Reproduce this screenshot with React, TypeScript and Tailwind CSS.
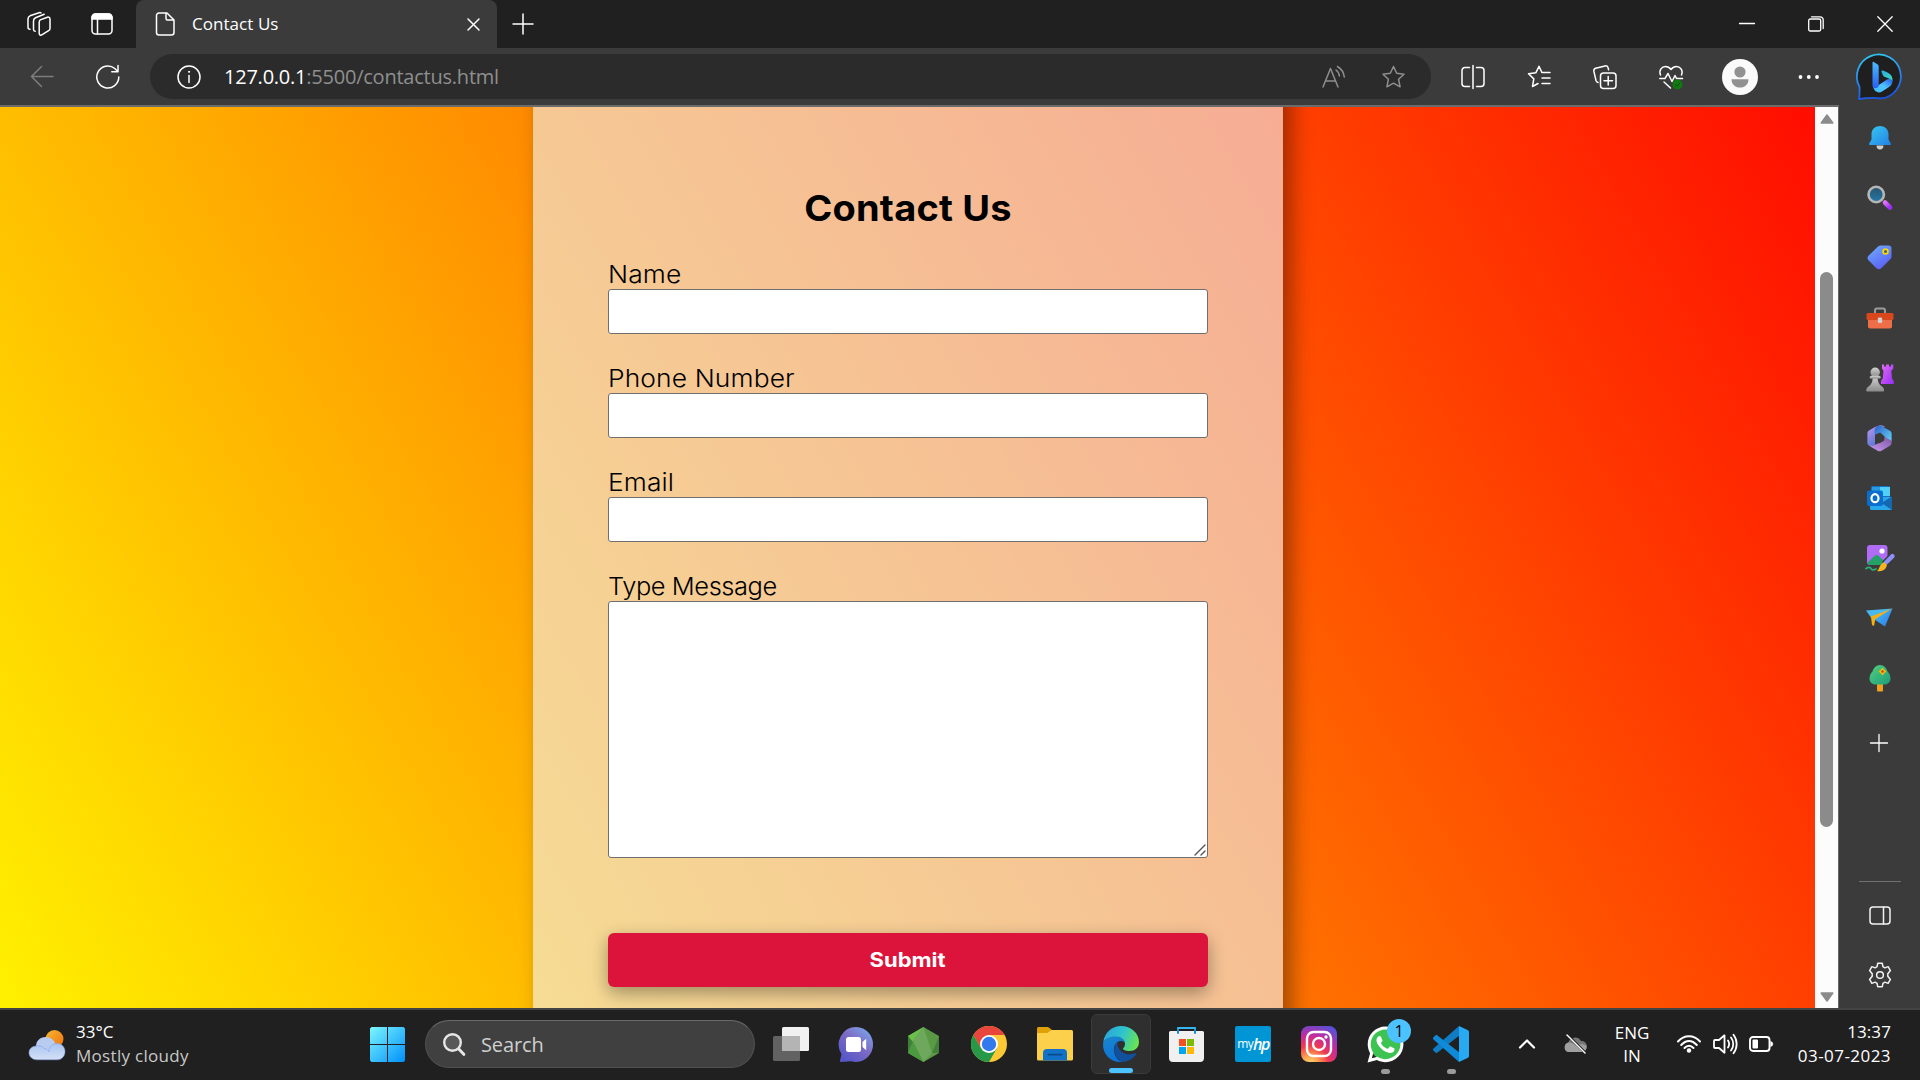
import type { ReactNode } from "react";
import { FaWhatsapp } from "react-icons/fa";

type IconProps = { w?: number; h?: number; box?: string; strokeWidth?: number; className?: string; children: ReactNode };

function Icon({ w = 24, h = 24, box, strokeWidth = 1.5, className = "", children }: IconProps) {
  return (
    <svg
      width={w}
      height={h}
      viewBox={box ?? `0 0 ${w} ${h}`}
      fill="none"
      stroke="currentColor"
      strokeWidth={strokeWidth}
      strokeLinecap="round"
      strokeLinejoin="round"
      className={`block shrink-0 overflow-visible ${className}`}
    >
      {children}
    </svg>
  );
}

function Slot({ className = "", children }: { className?: string; children: ReactNode }) {
  return <div className={`flex shrink-0 items-center justify-center ${className}`}>{children}</div>;
}

const STAR = "M12 1.5l3.2 6.8 7.3.9-5.4 5.1 1.5 7.5L12 18.2l-6.6 3.6 1.5-7.5L1.5 9.2l7.3-.9z";

/* ---------- Tab strip ---------- */
function TabStrip() {
  return (
    <div className="flex h-12 shrink-0 bg-[#202020] text-white">
      <Slot className="ml-[27px] w-6">
        <Icon>
          <path d="M13.2 7.9l7.2-2.7c1.3-.5 2.6.3 2.6 1.7v9.5c0 1-.5 1.8-1.4 2.3l-6.8 4.2c-1.2.8-2.6 0-2.6-1.4v-11c0-1.1.3-2.2 1-2.6z" />
          <path d="M8.2 19.2c-1 0-1.7-.7-1.7-1.7V9c0-1.500.7-2.600 2-3.200l8.700-3.500" />
          <path d="M3 17.2c-1.2 0-2-.8-2-2V7c0-1.400.8-2.600 2-3.200L12 .7c.8-.3 1.500-.2 2 .2" />
        </Icon>
      </Slot>
      <Slot className="ml-[40px] w-[22px]">
        <Icon w={22} h={22}>
          <rect x="1" y="1" width="20" height="20" rx="3.500" />
          <path d="M1 6V4.500A3.500 3.500 0 0 1 4.500 1h13A3.500 3.500 0 0 1 21 4.500V6z" fill="currentColor" />
          <path d="M6.500 6v15" />
        </Icon>
      </Slot>
      <div className="ml-[23px] flex h-12 w-[361px] items-center rounded-t-lg bg-[#3b3b3b]">
        <Icon w={20} h={24} className="ml-[19px]">
          <path d="M4 1h8l7 7v12.500a2.500 2.500 0 0 1-2.500 2.500H4a2.500 2.500 0 0 1-2.500-2.500v-17A2.500 2.500 0 0 1 4 1zM11 1v5.500A1.500 1.500 0 0 0 12.500 8H19" />
        </Icon>
        <span className="ml-[17px] w-[275px] font-['Open_Sans','Noto_Sans',sans-serif] text-[17px] tracking-[0.05px] whitespace-nowrap">
          Contact Us
        </span>
        <Icon w={13} h={13} className="mt-px">
          <path d="M1 1l11 11M12 1L1 12" />
        </Icon>
      </div>
      <Slot className="ml-[15px] w-[22px]">
        <Icon w={22} h={22} className="-mt-px">
          <path d="M11 1v20M1 11h20" />
        </Icon>
      </Slot>
      <div className="mr-px ml-auto flex">
        <Slot className="w-[69px]">
          <Icon w={16} h={16}>
            <path d="M.5 7.500h15" strokeWidth={1.3} />
          </Icon>
        </Slot>
        <Slot className="w-[69px]">
          <Icon w={16} h={16} className="-mt-px">
            <rect x=".7" y="3" width="12" height="12" rx="1.500" strokeWidth={1.3} />
            <path d="M3.500.8H12A3 3 0 0 1 15.200 4v8.500" strokeWidth={1.3} />
          </Icon>
        </Slot>
        <Slot className="w-[69px]">
          <Icon w={16} h={16} className="-mt-px">
            <path d="M.8.800l14.400 14.400M15.200.800L.8 15.200" strokeWidth={1.3} />
          </Icon>
        </Slot>
      </div>
    </div>
  );
}

/* ---------- Address bar ---------- */
function Toolbar() {
  return (
    <div className="flex h-[57px] shrink-0 items-center bg-[#3b3b3b] text-white">
      <Slot className="ml-[30px] w-6 text-[#7d7d7d]">
        <Icon>
          <path d="M23 11.500H1.500M11.500 1.500L1.500 11.500l10 10" />
        </Icon>
      </Slot>
      <Slot className="ml-[42px] w-6">
        <Icon>
          <path d="M22.800 12A11 11 0 1 1 18.800 3.500L21.800 6.500M22 .5v6.200h-6.200" />
        </Icon>
      </Slot>
      <div className="ml-[30px] flex h-[45px] w-[1281px] items-center rounded-full bg-[#2b2b2b]">
        <Icon className="ml-[27px]">
          <circle cx="12" cy="12" r="11" />
          <path d="M12 10.500v7" />
          <circle cx="12" cy="6.800" r=".6" fill="currentColor" strokeWidth={1} />
        </Icon>
        <span className="ml-[23px] font-['Open_Sans','Noto_Sans',sans-serif] text-[20px] tracking-[-0.23px] whitespace-nowrap text-[#8f8f8f]">
          <span className="text-white">127.0.0.1</span>:5500/contactus.html
        </span>
        <div className="mr-[25px] ml-auto flex text-[#8f8f8f]">
          <Icon>
            <path d="M1 22L8.500 3.500 16 22M3.500 16h10M14 5c2 1.500 3.200 3.500 3.400 6M15.500 1.500c3.500 2.200 6.300 6 6.800 10.500" />
          </Icon>
          <Icon w={25} h={24} box="0 0 24 24" className="ml-[35px]">
            <path d={STAR} />
          </Icon>
        </div>
      </div>
      <Slot className="ml-[9px] w-[66px]">
        <Icon>
          <path d="M8.500 2.500H4A3 3 0 0 0 1 5.500v13a3 3 0 0 0 3 3h4.500M15.500 2.500H20a3 3 0 0 1 3 3v13a3 3 0 0 1-3 3h-4.500M12 .5v23" />
        </Icon>
      </Slot>
      <Slot className="w-[66px]">
        <Icon>
          <path d="M14.800 7.200L12 1.300 8.800 7.800l-7.300 1 5.300 5.100-1.300 7.600 5.500-3M14.800 7.500H23M15 13h8M15 18.500h8" />
        </Icon>
      </Slot>
      <Slot className="w-[66px]">
        <Icon>
          <rect x="7.500" y="8" width="15.500" height="15.500" rx="3" />
          <path d="M15.200 11.500v8.500M11 15.700h8.500M5 17.500c-1-.3-1.700-1-2-2L.9 6.400c-.3-1.500.4-2.700 1.800-3.100L12 .9c1.400-.3 2.500.3 3 1.600l.6 2.200" />
        </Icon>
      </Slot>
      <Slot className="w-[66px]">
        <Icon>
          <path d="M1.500 10C-.5 5 3 1.500 6.500 1.500c2.500 0 4 1 5.500 3 1.500-2 3-3 5.500-3C21 1.500 24.500 5 22.500 10M.8 13.500H6L9 8.500l4 8 3-6 1.500 3h6M5 17l6.500 6" />
          <circle cx="18.500" cy="19.500" r="5" fill="#0f7b0f" stroke="none" />
          <path d="M16.300 19.700l1.600 1.600 3-3.200" stroke="#1c3d1c" strokeWidth={1} />
        </Icon>
      </Slot>
      <Slot className="ml-[2px] w-[68px]">
        <Icon w={36} h={36}>
          <circle cx="18" cy="18" r="18" fill="#fafafa" stroke="none" />
          <circle cx="18" cy="13" r="5.600" fill="#919191" stroke="none" />
          <path d="M9.500 20.200h17c0 5-3.500 8.300-8.500 8.300s-8.500-3.300-8.500-8.300z" fill="#919191" stroke="none" />
        </Icon>
      </Slot>
      <Slot className="w-[70px]">
        <Icon w={22} h={6}>
          <g fill="currentColor" stroke="none">
            <circle cx="2.500" cy="3" r="1.900" />
            <circle cx="10.800" cy="3" r="1.900" />
            <circle cx="19" cy="3" r="1.900" />
          </g>
        </Icon>
      </Slot>
      <Slot className="ml-px w-[70px]">
        <Icon w={45} h={46}>
          <defs>
            <linearGradient id="bingRing" x1="0.400" y1="0" x2="0.600" y2="1">
              <stop offset="0" stopColor="#2fc4f0" />
              <stop offset="0.500" stopColor="#2a86f0" />
              <stop offset="1" stopColor="#1a50e0" />
            </linearGradient>
            <linearGradient id="bingStem" x1="0" y1="0" x2="0" y2="1">
              <stop offset="0" stopColor="#4cbcff" />
              <stop offset="1" stopColor="#2860f0" />
            </linearGradient>
            <linearGradient id="bingBase" x1="0" y1="1" x2="1" y2="0">
              <stop offset="0" stopColor="#3cc0ff" />
              <stop offset="0.500" stopColor="#50c4ff" />
              <stop offset="1" stopColor="#2258e8" />
            </linearGradient>
            <linearGradient id="bingBowl" x1="0" y1="0" x2="1" y2="1">
              <stop offset="0" stopColor="#2aa8e0" />
              <stop offset="1" stopColor="#3be0c0" />
            </linearGradient>
          </defs>
          <path
            d="M1 45c.6-3 .8-7 .5-12A22 22 0 1 1 22.500 44.500C15 43 8 44 1 45z"
            fill="#1f1f1f"
            stroke="url(#bingRing)"
            strokeWidth={1.8}
          />
          <g stroke="none">
            <path d="M15 31c0 6 5 9 9 6.500l7-4.500c2.500-1.500 3.500-4 3.500-6.500-1-2-3-2.500-5.500-1L20 31.500z" fill="url(#bingBase)" />
            <path d="M14.500 8.500c0-.8.600-1 1.200-.6l3.300 2c1 .6 1.700 1.200 1.700 2.500V31.500c0 3-6.200 4-6.200 0z" fill="url(#bingStem)" />
            <path d="M23.500 18c-.4-1.200.5-1.900 1.600-1.400l4.400 2c3.500 1.700 5.300 4.400 5 8.400-1-1.500-2-2-3.500-2.500l-4-1.500c-1.200-.4-1.800-1-2.200-2z" fill="url(#bingBowl)" />
          </g>
        </Icon>
      </Slot>
    </div>
  );
}

/* ---------- Web page ---------- */
const LABEL =
  "block h-[30px] w-max origin-left pt-px font-['Inter','Open_Sans',sans-serif] text-[24px] leading-[30px] font-[340] text-black whitespace-nowrap";
const FIELD = "block w-full rounded-[3px] border border-[#6f6f6f] bg-white outline-none";

function Field({ label }: { label: string }) {
  return (
    <label className="mb-[29px] block">
      <span className={`${LABEL} scale-x-110 tracking-[0.1px]`}>{label}</span>
      <input className={`${FIELD} h-[45px]`} />
    </label>
  );
}

function WebPage() {
  return (
    <div className="w-[1815px] shrink-0 overflow-hidden">
      <div className="-mt-[229px] flex h-[1386px] justify-center bg-[linear-gradient(60deg,#ffff00,#ff0000)]">
        <div className="ml-px w-[750px] bg-[rgba(240,240,240,0.615)] px-[75px] pt-[229px] shadow-[9px_0_20px_rgba(0,0,0,0.37)]">
          <h1 className="mt-[76px] h-[50px] scale-x-[1.055] text-center font-['Inter','Open_Sans',sans-serif] text-[36px] leading-[50px] font-bold tracking-[0.2px] text-black">
            Contact Us
          </h1>
          <form className="pt-[26px]">
            <Field label="Name" />
            <Field label="Phone Number" />
            <Field label="Email" />
            <label className="relative block">
              <span className={`${LABEL} scale-x-106 tracking-[-0.4px]`}>Type Message</span>
              <textarea className={`${FIELD} h-[257px] resize-none`} />
              <Icon w={12} h={12} strokeWidth={1.4} className="absolute right-[2px] bottom-[2px] text-[#555]">
                <path d="M1 11L11 1M7 11l4-4" />
              </Icon>
            </label>
            <button
              type="button"
              className="mt-[75px] h-[54px] w-full rounded-[6px] bg-[#dc143c] font-['Inter','Open_Sans',sans-serif] text-[20px] font-bold text-white shadow-[0_6px_18px_rgba(0,0,0,0.36)]"
            >
              <span className="inline-block scale-x-110">Submit</span>
            </button>
          </form>
        </div>
      </div>
    </div>
  );
}

function ScrollBar() {
  return (
    <div className="flex w-6 shrink-0 flex-col items-center border-r border-[#666] bg-[#fcfcfc]">
      <Icon w={14} h={10} className="mt-[7px]">
        <path d="M7 1l5.800 8H1.200z" fill="#8b8b8b" stroke="#8b8b8b" />
      </Icon>
      <div className="mt-[148px] h-[555px] w-[13px] rounded-full bg-[#8b8b8b]" />
      <Icon w={14} h={10} className="mt-auto mb-[6px]">
        <path d="M7 9l5.800-8H1.200z" fill="#8b8b8b" stroke="#8b8b8b" />
      </Icon>
    </div>
  );
}

/* ---------- Edge sidebar ---------- */
function SideBar() {
  return (
    <div className="relative flex flex-1 flex-col items-center bg-[#3b3b3b] text-[#f2f2f2]">
      <svg width="0" height="0" className="absolute">
        <defs>
          <linearGradient id="sBell" x1="0" y1="0" x2="1" y2="1">
            <stop offset="0" stopColor="#38c8f0" />
            <stop offset="1" stopColor="#2380e8" />
          </linearGradient>
          <linearGradient id="sPurple" x1="0" y1="0" x2="1" y2="1">
            <stop offset="0" stopColor="#e070f5" />
            <stop offset="1" stopColor="#9a2cf5" />
          </linearGradient>
          <linearGradient id="sTag" x1="0" y1="0" x2="0.600" y2="1">
            <stop offset="0" stopColor="#6fb0ff" />
            <stop offset="1" stopColor="#5b60f5" />
          </linearGradient>
          <linearGradient id="sGray" x1="0" y1="0" x2="0" y2="1">
            <stop offset="0" stopColor="#d2d2d2" />
            <stop offset="1" stopColor="#8a8a8a" />
          </linearGradient>
          <linearGradient id="sGlass" x1="0" y1="0" x2="0" y2="1">
            <stop offset="0" stopColor="#28546c" />
            <stop offset="1" stopColor="#2378a8" />
          </linearGradient>
          <linearGradient id="sPlane" x1="0" y1="0" x2="1" y2="1">
            <stop offset="0" stopColor="#4cc2f5" />
            <stop offset="1" stopColor="#2878e8" />
          </linearGradient>
          <linearGradient id="sTree" x1="0" y1="0" x2="1" y2="1">
            <stop offset="0" stopColor="#52d080" />
            <stop offset="1" stopColor="#1c9c78" />
          </linearGradient>
          <linearGradient id="sM1" x1="0" y1="0" x2="1" y2="1">
            <stop offset="0" stopColor="#2c60c8" />
            <stop offset="1" stopColor="#68d8fa" />
          </linearGradient>
          <linearGradient id="sM2" x1="0" y1="0" x2="0.600" y2="1">
            <stop offset="0" stopColor="#c498f0" />
            <stop offset="1" stopColor="#4070d0" />
          </linearGradient>
          <linearGradient id="sM3" x1="0" y1="1" x2="1" y2="0">
            <stop offset="0" stopColor="#cc98f0" />
            <stop offset="1" stopColor="#7c58a4" />
          </linearGradient>
        </defs>
      </svg>
      <div className="mt-[4px] flex flex-col">
        <Slot className="h-[58px]">
          <Icon w={24} h={26}>
            <g stroke="none">
              <path d="M8.500 20.500h7c0 2.600-1.400 4-3.500 4s-3.500-1.400-3.500-4z" fill="#cfcfcf" />
              <path d="M12 1c5.500 0 8.500 4 8.500 8.500v5l2.300 4c.4.900 0 1.500-.9 1.500H2.100c-.9 0-1.300-.6-.9-1.500l2.300-4v-5C3.500 5 6.500 1 12 1z" fill="url(#sBell)" />
            </g>
          </Icon>
        </Slot>
        <Slot className="h-[60px]">
          <Icon w={25} h={25}>
            <path d="M18 17.500l5 5" stroke="url(#sPurple)" strokeWidth={4.6} />
            <circle cx="9.200" cy="9.500" r="7.700" fill="url(#sGlass)" stroke="#b5b5b5" strokeWidth={2.6} />
          </Icon>
        </Slot>
        <Slot className="h-[61px]">
          <Icon w={25} h={25}>
            <path d="M14 .5h7.500A3 3 0 0 1 24.500 3.500V11c0 1.500-.5 2.500-1.500 3.500l-8.500 8.500c-1.800 1.800-3.500 1.800-5.300 0L2 15.800c-2-2-2-3.600-.2-5.400L10.500 2c1-1 2-1.500 3.500-1.500z" fill="url(#sTag)" stroke="none" />
            <circle cx="18.500" cy="6.500" r="2.400" stroke="#f5d70a" strokeWidth={1.8} fill="#4a5a70" />
          </Icon>
        </Slot>
        <Slot className="h-[60px]">
          <Icon w={28} h={22}>
            <path d="M9 6.500V3.500a2 2 0 0 1 2-2h6a2 2 0 0 1 2 2v3" stroke="#9c9c9c" strokeWidth={2} />
            <path d="M2 11h24v8.500a2 2 0 0 1-2 2H4a2 2 0 0 1-2-2z" fill="#ee6f47" stroke="none" />
            <rect x=".5" y="6" width="27" height="7" rx="1.500" fill="#d9481c" stroke="none" />
            <rect x="11.800" y="10.500" width="4.400" height="5.500" rx="1.300" fill="#d0d0d0" stroke="none" />
          </Icon>
        </Slot>
        <Slot className="h-[60px]">
          <Icon w={28} h={28}>
            <path d="M16 .5h2v2h2v-2h3v2h2v-2h2.300v4l-2 2.500.7 7.500 1.800 2.700v2.800H15v-3l1.800-2.700.7-7.300-1.500-2.500z" fill="url(#sPurple)" stroke="none" />
            <g fill="url(#sGray)" stroke="none">
              <path d="M6.500 12.500h5.500l-.4 1.500c.2 4 1.400 6 3.500 8 2.500 1.500 3 3 3 4.200 0 .8-.5 1.300-1.300 1.300H1.500c-.8 0-1.300-.5-1.300-1.300 0-1.200.8-2.700 3-4.200 2.300-2 3.400-4 3.500-8z" />
              <circle cx="9.200" cy="8.200" r="4.700" />
              <rect x="3.700" y="11.800" width="11" height="3" rx="1.500" />
            </g>
          </Icon>
        </Slot>
        <Slot className="h-[60px]">
          <Icon w={25} h={27}>
            <g stroke="none">
              <path d="M7.500 2.200L2 5.600C.9 6.300.4 7.300.4 8.600v9c0 1.300.5 2.300 1.600 3l6 3.600V9.500c0-1.300.6-2.300 1.700-3L18 1.300 15 .5c-1.200-.4-2.500-.3-3.600.3z" fill="url(#sM2)" />
              <path d="M10.500.9c1.300-.7 2.800-.7 4.100 0l8.300 4.800c1.100.7 1.700 1.700 1.700 3V16l-4 2.200-3-6.800-4.500-3.800L7.800 9.800c0-3.500-1.300-6.500 2.700-8.900z" fill="url(#sM1)" />
              <path d="M24.600 15.500v2.200c0 1.300-.6 2.300-1.700 3l-8.300 5c-1.300.7-2.800.7-4.100 0L2 20.600 5.500 21l11.800-5.500V12z" fill="url(#sM3)" />
            </g>
            <path d="M12.500 8.800l4.200 2.400v4.600l-4.200 2.400-4.200-2.400v-4.600z" fill="#3b3b3b" stroke="none" />
          </Icon>
        </Slot>
        <Slot className="h-[60px]">
          <Icon w={25} h={24}>
            <g stroke="none">
              <rect x="4" y="0" width="19" height="16" rx="1.500" fill="#1a70c0" />
              <rect x="13" y="1" width="10" height="9" fill="#50d0f8" />
              <rect x="5" y="1" width="8" height="4" fill="#2a9ae0" />
              <path d="M3 11h22v11.500a1.500 1.500 0 0 1-1.500 1.500h-19A1.500 1.500 0 0 1 3 22.500z" fill="#28a8ea" />
              <path d="M25 10.500L14.500 17 25 24z" fill="#1468b0" />
              <rect x="0" y="4.500" width="16" height="15.500" rx="2" fill="#0a6fcc" />
            </g>
            <ellipse cx="8" cy="12.200" rx="3.500" ry="4" stroke="#fff" strokeWidth={2.2} />
          </Icon>
        </Slot>
        <Slot className="h-[60px]">
          <Icon w={28} h={27}>
            <g stroke="none">
              <rect x="1" y="0" width="20.500" height="20" rx="3" fill="#b06cf5" />
              <path d="M1.500 17.500l7-6.500c1.500-1.300 2.800-1.300 4.200 0l8.300 7.500c-.5 1-1.400 1.500-2.500 1.500H4c-1.200 0-2.100-.7-2.500-2.500z" fill="#25a068" />
              <circle cx="16" cy="6" r="2.600" fill="#fff" />
            </g>
            <path d="M0 23.500c2.500-1.500 4.500-1.500 5 0s2 2 5 .5" stroke="#2ab078" strokeWidth={1.8} />
            <path d="M20 17.500l6.500-6.500" stroke="#3b3b3b" strokeWidth={7} />
            <path d="M20 17.500l6.500-6.300" stroke="#8c90f8" strokeWidth={4.4} />
            <path d="M18 17l3 3c-1 4.500-4.500 7-10 6 2.500-1.500 2-6 7-9z" fill="#f5b420" stroke="none" />
          </Icon>
        </Slot>
        <Slot className="h-[60px]">
          <Icon w={27} h={20}>
            <g stroke="none">
              <path d="M0 2.500L26.500.5 6 11z" fill="#48b8f0" />
              <path d="M5 8.500L26.500.5 9 12.500 8 18l-2-1z" fill="#f5b010" />
              <path d="M26.500.5L19 18.500 8.500 11.500z" fill="url(#sPlane)" />
            </g>
          </Icon>
        </Slot>
        <Slot className="h-[61px]">
          <Icon w={22} h={27}>
            <g stroke="none">
              <rect x="8" y="17" width="6" height="9.500" rx="1" fill="#f0a020" />
              <path d="M11 0c4 0 6.500 3 7.500 6.500 2 2 3 4.500 3 7 0 3.500-2.500 6-6 6h-9c-3.500 0-6-2.500-6-6 0-2.500 1-5 3-7C4.500 3 7 0 11 0z" fill="url(#sTree)" />
              <path d="M13.500 2.500l1.700 2.200 2.300 1.800-2.300 1.800-1.700 2.200-1.800-2.200-2.200-1.800 2.200-1.800z" fill="#f8b810" />
              <circle cx="13.500" cy="6.500" r="1.200" fill="#b05010" />
            </g>
          </Icon>
        </Slot>
        <Slot className="mt-[4px] h-[60px] text-white">
          <Icon w={18} h={18} className="mr-[2px]">
            <path d="M9 .5v17M.5 9h17" strokeWidth={1.3} />
          </Icon>
        </Slot>
      </div>
      <div className="mt-auto h-px w-[42px] bg-[#707070]" />
      <Slot className="mt-[3px] h-[60px]">
        <Icon w={22} h={19}>
          <rect x="1" y="1" width="20" height="17" rx="3" />
          <path d="M14.500 1v17" />
        </Icon>
      </Slot>
      <Slot className="mb-[3px] h-[60px]">
        <Icon w={26} h={26} box="0 0 24 24">
          <circle cx="12" cy="12" r="3.100" strokeWidth={1.4} />
          <path
            d="M9.900 1.200H14.100L14.700 4.300 16.500 5.400 19.500 4.300 21.600 7.900 19.200 10.900V13.100L21.600 16.100 19.500 19.700 16.500 18.600 14.700 19.700 14.100 22.800H9.900L9.300 19.700 7.500 18.600 4.500 19.700 2.400 16.100 4.800 13.100V10.900L2.400 7.900 4.500 4.300 7.500 5.400 9.300 4.300z"
            strokeWidth={1.4}
          />
        </Icon>
      </Slot>
    </div>
  );
}

/* ---------- Taskbar ---------- */
const UI = "font-['Open_Sans','Noto_Sans',sans-serif] whitespace-nowrap";

function Apps() {
  return (
    <div className="ml-[3px] flex">
      <Slot className="w-[66px]">
        <Icon w={36} h={34}>
          <g stroke="none">
            <rect x="9" y="0" width="27" height="24" rx="1.500" fill="#f1f1f1" />
            <rect x="0" y="9" width="27" height="25" rx="1.500" fill="#626262" />
            <rect x="9" y="9" width="18" height="15" fill="#b4b4b4" />
          </g>
        </Icon>
      </Slot>
      <Slot className="w-[66px]">
        <Icon w={34} h={35} className="mr-[2px]">
          <defs>
            <linearGradient id="chat" x1="1" y1="0" x2="0.200" y2="1">
              <stop offset="0" stopColor="#7ab0f5" />
              <stop offset="0.500" stopColor="#7d6cc4" />
              <stop offset="1" stopColor="#5555c8" />
            </linearGradient>
          </defs>
          <path d="M17 0a17 17.500 0 1 1-5 34.200L2 35c-.8 0-1.300-.5-1-1.200L2.500 27A17.500 17.500 0 0 1 17 0z" fill="url(#chat)" stroke="none" />
          <rect x="7" y="10" width="15" height="15" rx="2.500" fill="#fff" stroke="none" />
          <path d="M23.500 15l3.700-3.200v11.400L23.500 20z" fill="#fff" stroke="none" />
        </Icon>
      </Slot>
      <Slot className="w-[66px]">
        <Icon w={31} h={35}>
          <g stroke="none">
            <path d="M15.500 0L31 9v17l-15.500 9L0 26V9z" fill="#5a9a45" />
            <path d="M15.500 0L0 9l4 6z" fill="#6cc04a" />
            <path d="M0 9l5 6-5 11z" fill="#3f8038" />
            <path d="M5 14l10.500 21L0 26z" fill="#4c9a40" />
            <path d="M15.500 0L5 14l10.500 21L24 26z" fill="#6ea85c" />
            <path d="M31 9l-7 17 7 0z" fill="#42803c" />
          </g>
        </Icon>
      </Slot>
      <Slot className="w-[66px]">
        <Icon w={36} h={36}>
          <g stroke="none">
            <circle cx="18" cy="18" r="18" fill="#fcc934" />
            <path d="M2.400 9A18 18 0 0 1 33.600 9H18L10.200 22.500z" fill="#e8453c" />
            <path d="M2.400 9A18 18 0 0 0 18 36l7.800-13.500-15.600 0z" fill="#279847" />
            <circle cx="18" cy="18" r="9" fill="#fff" />
            <circle cx="18" cy="18" r="7.200" fill="#3279ee" />
          </g>
        </Icon>
      </Slot>
      <Slot className="w-[66px]">
        <Icon w={36} h={34}>
          <g stroke="none">
            <path d="M0 1.500A1.500 1.500 0 0 1 1.500 0H10c1 0 1.800.3 2.500 1l2.500 2-2 4H0z" fill="#e0a008" />
            <path d="M0 6h10c1.500 0 3-3 5-3h19.500A1.500 1.500 0 0 1 36 4.500V32a1.500 1.500 0 0 1-1.500 1.500h-33A1.500 1.500 0 0 1 0 32z" fill="#fdd04b" />
            <path d="M6 33.500V26a4 4 0 0 1 4-4h16a4 4 0 0 1 4 4v7.500z" fill="#1272c8" />
            <rect x="10.500" y="26.700" width="15" height="1.800" rx=".9" fill="#0b4a88" />
          </g>
        </Icon>
      </Slot>
      <div className="relative mx-[3px] mt-[4px] flex h-[60px] w-[60px] shrink-0 items-center justify-center rounded-md border border-[#3a3a3a] bg-[#2f2f2f]">
        <Icon w={36} h={36}>
          <defs>
            <linearGradient id="edTop" x1="0" y1="0.300" x2="1" y2="0.600">
              <stop offset="0" stopColor="#2aa4dc" />
              <stop offset="0.500" stopColor="#2fc4cc" />
              <stop offset="1" stopColor="#6be64c" />
            </linearGradient>
            <linearGradient id="edMid" x1="0" y1="0" x2="0.400" y2="1">
              <stop offset="0" stopColor="#1c86cc" />
              <stop offset="1" stopColor="#0a74d8" />
            </linearGradient>
          </defs>
          <g stroke="none">
            <path d="M.3 16C1.500 6.500 9 0 18 0c10 0 18 7 18 16 0 6-4.500 9-9.500 9-4 0-6.500-1.300-6.500-2.300 0-.8 2-1.700 2-4.700 0-4-4-7-8.500-7C8 11 3 12.500.3 16z" fill="url(#edTop)" />
            <path d="M.3 16C2.500 12.300 7.500 10.500 12.500 10.500 17.500 10.500 21.500 13 22 17c-1.500-2-4-2.500-6.500-1.500-3 1.300-5 5-4.500 9.500.5 5.500 4 9.500 8.500 11C8 37 0 28.500 0 19z" fill="url(#edMid)" />
            <path d="M14.500 15.800C9.500 20 9.500 31 19.500 36c5.500-.3 10.500-3 13.500-7.500.6-1-.2-1.700-1.200-1.200-3 1.500-9 1.700-12.800-1.300-4-3-4.800-7.500-4.500-10.200z" fill="#11509c" />
          </g>
        </Icon>
        <div className="absolute bottom-0 h-[5px] w-6 rounded-full bg-[#4cc2ff]" />
      </div>
      <Slot className="w-[66px]">
        <Icon w={35} h={36} className="mr-px">
          <path d="M9 8V2h17v6" stroke="#35b5f0" strokeWidth={2} />
          <g stroke="none">
            <path d="M0 6.500A1.500 1.500 0 0 1 1.500 5h32A1.500 1.500 0 0 1 35 6.500V32a4 4 0 0 1-4 4H4a4 4 0 0 1-4-4z" fill="#f0f0f0" />
            <rect x="10" y="13" width="7" height="7" fill="#f25022" />
            <rect x="18" y="13" width="7" height="7" fill="#7fba00" />
            <rect x="10" y="21" width="7" height="7" fill="#00a4ef" />
            <rect x="18" y="21" width="7" height="7" fill="#ffb900" />
          </g>
          <path d="M9 7V4M26 7V4" stroke="#1c8ad0" strokeWidth={2} />
        </Icon>
      </Slot>
      <Slot className="w-[66px]">
        <div className="flex h-9 w-9 items-center justify-center rounded-[2px] bg-[#0096d6] text-white">
          <span className="font-['Open_Sans',sans-serif] text-[12px] leading-4 tracking-[-0.6px]">my</span>
          <span className="font-['Open_Sans',sans-serif] text-[16px] leading-4 font-semibold tracking-[-1.5px] italic">hp</span>
        </div>
      </Slot>
      <Slot className="w-[66px]">
        <Icon w={36} h={36}>
          <defs>
            <radialGradient id="ig" cx="0.250" cy="1.050" r="1.150">
              <stop offset="0" stopColor="#fedc70" />
              <stop offset="0.200" stopColor="#fca050" />
              <stop offset="0.450" stopColor="#f03850" />
              <stop offset="0.700" stopColor="#c02ca0" />
              <stop offset="1" stopColor="#5a50d8" />
            </radialGradient>
          </defs>
          <rect width="36" height="36" rx="8" fill="url(#ig)" stroke="none" />
          <g stroke="#fff" strokeWidth={2.4}>
            <rect x="6" y="6" width="24" height="24" rx="6.500" />
            <circle cx="18" cy="18" r="6" />
          </g>
          <circle cx="25" cy="11" r="1.700" fill="#fff" stroke="none" />
        </Icon>
      </Slot>
      <div className="relative flex w-[66px] shrink-0 items-center justify-center">
        <div className="relative flex h-9 w-9 items-center justify-center">
          <div className="absolute h-[31px] w-[31px] rounded-full bg-[#3cc351]" />
          <FaWhatsapp className="relative h-[41px] w-[41px] shrink-0 text-white" />
          <div className="absolute -top-[7px] -right-[8px] flex h-6 w-6 items-center justify-center rounded-full bg-[#4cc2ff] font-['Open_Sans',sans-serif] text-[16px] text-black">
            1
          </div>
        </div>
        <div className="absolute bottom-[4px] h-[5px] w-[9px] rounded-full bg-[#9a9a9a]" />
      </div>
      <div className="relative flex w-[66px] shrink-0 items-center justify-center">
        <Icon w={36} h={36}>
          <g stroke="none">
            <path d="M26 0l1 9L4.500 26.500c-.8.600-1.600.5-2.200 0L.5 24.800c-.7-.7-.7-1.600 0-2.300z" fill="#0f7cc4" />
            <path d="M26 36l1-9L4.500 9.500c-.8-.6-1.600-.5-2.200 0L.5 11.200c-.7.7-.7 1.600 0 2.300z" fill="#1089d6" />
            <path d="M26 0l8.500 4c1 .5 1.500 1.200 1.500 2.200v23.600c0 1-.5 1.700-1.500 2.200L26 36z" fill="#28aaf2" />
          </g>
        </Icon>
        <div className="absolute bottom-[4px] h-[5px] w-[9px] rounded-full bg-[#9a9a9a]" />
      </div>
    </div>
  );
}

function TaskBar() {
  return (
    <div className="flex h-[72px] shrink-0 border-t-2 border-[#444] bg-[#202020] pb-[2px] text-white">
      <div className="flex w-[354px] items-center">
        <Icon w={36} h={30} className="mt-[2px] ml-[29px]">
          <defs>
            <linearGradient id="sun" x1="0" y1="0" x2="1" y2="1">
              <stop offset="0" stopColor="#f5b830" />
              <stop offset="1" stopColor="#f07010" />
            </linearGradient>
            <linearGradient id="cloud" x1="0" y1="0" x2="0" y2="1">
              <stop offset="0" stopColor="#a8c4f2" />
              <stop offset="1" stopColor="#d5e0f5" />
            </linearGradient>
          </defs>
          <circle cx="25.500" cy="9" r="9" fill="url(#sun)" stroke="none" />
          <path d="M7 16C7 11 11 7 16.500 7c5 0 9 3 10 7.500l-2 11H8z" fill="#b8ccf2" stroke="none" />
          <path d="M7 16c3-.8 6 0 8 2.500 2.500 0 4.500 2 5 3.500 0-5 3-8.500 8-8.500 4.500 0 8 3.500 8 8S33 29.800 28 29.800H8c-4.500 0-8-3-8-7 0-4 3-6.500 7-6.800z" fill="url(#cloud)" stroke="#7c9ce8" strokeWidth={0.5} />
        </Icon>
        <div className={`${UI} ml-[11px] text-[17px] leading-6`}>
          <div>33°C</div>
          <div className="tracking-[0.3px] text-[#c8c8c8]">Mostly cloudy</div>
        </div>
      </div>
      <Slot className="w-[66px]">
        <Icon w={35} h={35}>
          <defs>
            <linearGradient id="win" gradientUnits="userSpaceOnUse" x1="0" y1="0" x2="35" y2="35">
              <stop offset="0" stopColor="#7cf6ff" />
              <stop offset="1" stopColor="#0090fa" />
            </linearGradient>
          </defs>
          <path d="M1.500 0H17v17H0V1.500zM18 0h15.500L35 1.500V17H18zM0 18h17v17H1.500L0 33.500zM18 18h17v15.500L33.500 35H18z" fill="url(#win)" stroke="none" />
        </Icon>
      </Slot>
      <div className="mt-[10px] ml-[5px] flex h-12 w-[330px] items-center rounded-full border border-[#505050] border-t-[#6a6a6a] bg-[#404040]">
        <Icon w={23} h={23} className="ml-[17px] text-[#e6e6e6]">
          <circle cx="9.500" cy="9.500" r="8.300" strokeWidth={2.4} fill="#585858" />
          <path d="M15.800 16l5 5.300" strokeWidth={3} />
        </Icon>
        <span className={`${UI} mt-px ml-[15px] text-[20px] tracking-[-0.1px] text-[#cfcfcf]`}>Search</span>
      </div>
      <Apps />
      <Slot className="ml-[19px] w-12">
        <Icon w={16} h={10}>
          <path d="M1 8.500L8 1.500l7 7" strokeWidth={2.2} />
        </Icon>
      </Slot>
      <Slot className="w-12">
        <Icon w={24} h={18} className="mr-px">
          <path d="M5 17a5 5 0 0 1 .3-9.500A7 7 0 0 1 18 6a5.500 5.500 0 0 1 1 11z" fill="#777" stroke="none" />
          <path d="M5 17a5 5 0 0 1 .3-9.500c3-.5 5 1 8 3.500 3-2.500 7-2.500 10 0 .5 3.500-1.500 6-4.300 6z" fill="#a0a0a0" stroke="none" />
          <path d="M5 .5l18 18" stroke="#202020" strokeWidth={2.5} />
          <path d="M4 0l18 18" />
        </Icon>
      </Slot>
      <div className={`${UI} flex w-[66px] flex-col justify-center text-center text-[17px] leading-[23px] tracking-[-0.1px]`}>
        <div>ENG</div>
        <div>IN</div>
      </div>
      <Slot className="ml-[6px] w-9">
        <Icon w={24} h={18}>
          <path d="M1 6.500C7-.5 17-.5 23 6.500M4.200 10C9 4.500 15 4.500 19.800 10M7.500 13c2.700-3 6.300-3 9 0" strokeWidth={2} />
          <circle cx="12" cy="15.500" r="2.200" fill="currentColor" stroke="none" />
        </Icon>
      </Slot>
      <Slot className="w-9">
        <Icon w={24} h={20}>
          <path d="M1 7v6c0 .6.400 1 1 1h4l5.500 4.700V1.300L6 6H2c-.6 0-1 .4-1 1zM15 6.500c1.300 2 1.300 5 0 7M18 3.500c3 3.800 3 9.200 0 13M20.500.8c4.200 5.400 4.200 13 0 18.400" strokeWidth={1.8} />
        </Icon>
      </Slot>
      <Slot className="w-9">
        <Icon w={24} h={16}>
          <rect x="1" y="1" width="19.500" height="14" rx="3" strokeWidth={1.9} />
          <rect x="3.500" y="3.500" width="5.500" height="9" rx="1" fill="currentColor" stroke="none" />
          <path d="M21.500 5.500c1.600.2 2.300 1.200 2.300 2.500s-.7 2.300-2.300 2.500z" fill="currentColor" strokeWidth={0.5} />
        </Icon>
      </Slot>
      <div className={`${UI} flex w-[112px] flex-col justify-center text-right text-[17px] leading-6`}>
        <div className="tracking-[0.1px]">13:37</div>
        <div className="tracking-[0.45px]">03-07-2023</div>
      </div>
    </div>
  );
}

export default function App() {
  return (
    <div className="flex h-[1080px] w-[1920px] flex-col overflow-hidden bg-[#202020]">
      <TabStrip />
      <Toolbar />
      <div className="flex h-[903px] shrink-0">
        <div className="flex w-[1839px] shrink-0 border-t-2 border-[#6b6b6b]">
          <WebPage />
          <ScrollBar />
        </div>
        <SideBar />
      </div>
      <TaskBar />
    </div>
  );
}
